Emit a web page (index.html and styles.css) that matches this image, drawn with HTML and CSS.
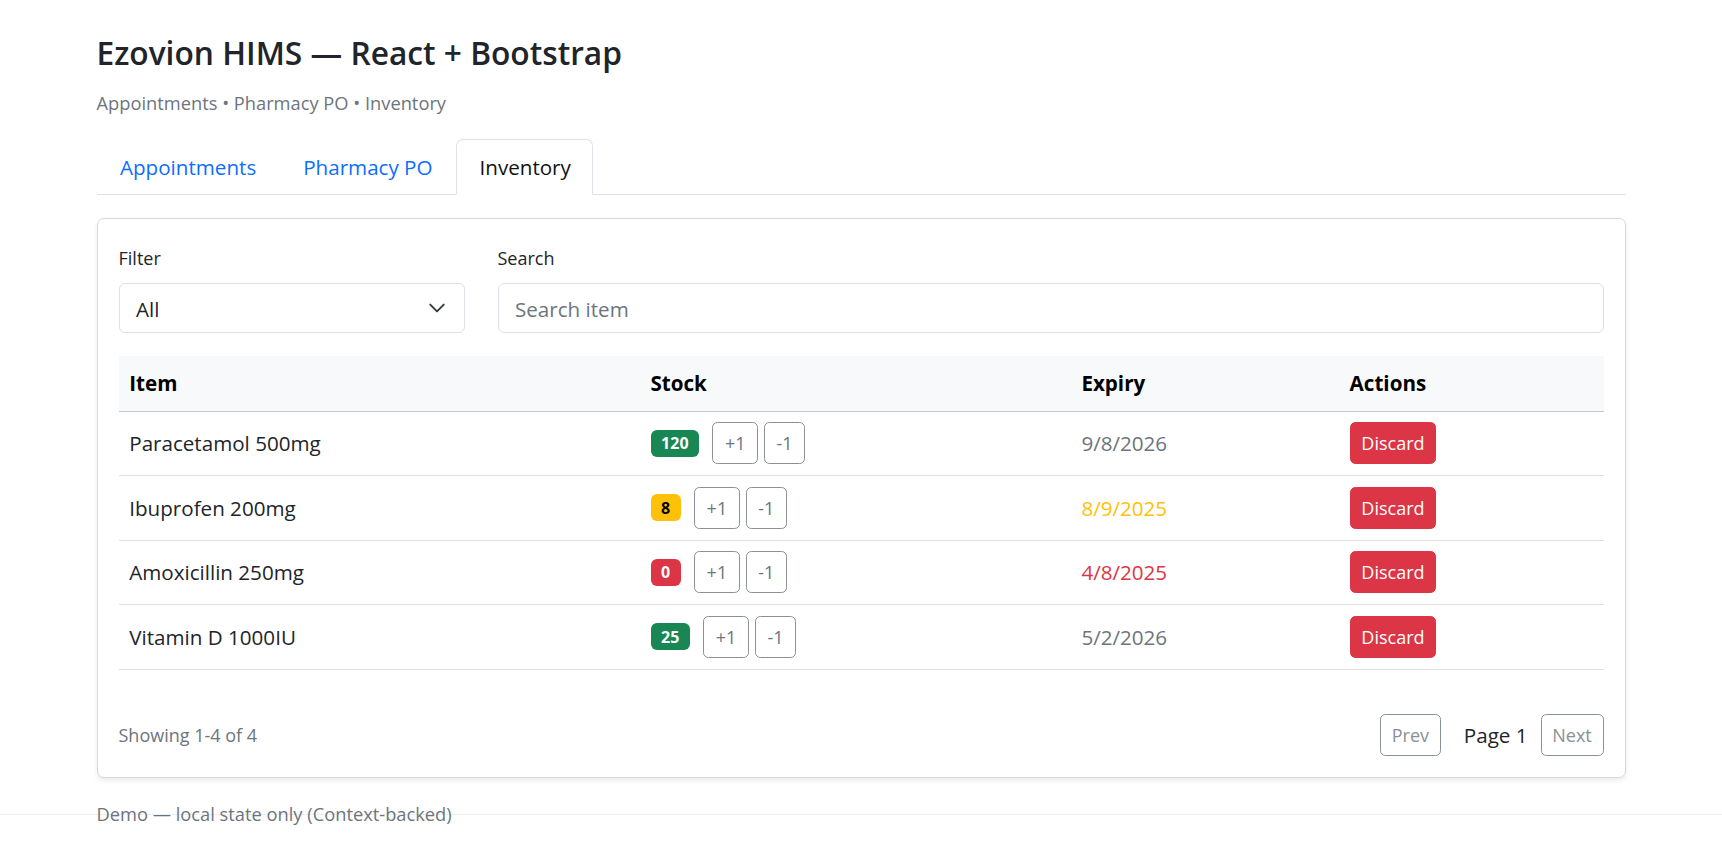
FILE: index.html
```html
<!DOCTYPE html>
<html lang="en">
<head>
<meta charset="utf-8">
<title>Ezovion HIMS — React + Bootstrap</title>
<link rel="stylesheet" href="styles.css">
</head>
<body>
<div class="page">
  <header class="head">
    <h1 class="title">Ezovion HIMS — React + Bootstrap</h1>
    <p class="subtitle">Appointments • Pharmacy PO • Inventory</p>
  </header>

  <nav class="tabs">
    <a class="tab" href="#">Appointments</a>
    <a class="tab" href="#">Pharmacy PO</a>
    <a class="tab active" href="#">Inventory</a>
  </nav>

  <section class="card">
    <div class="filters">
      <div class="field">
        <label class="label">Filter</label>
        <div class="select">
          <span>All</span>
          <svg class="chev" viewBox="0 0 16 16" width="18" height="18" aria-hidden="true"><path d="m2 5 6 6 6-6" fill="none" stroke="#343a40" stroke-width="1.7" stroke-linecap="round" stroke-linejoin="round"/></svg>
        </div>
      </div>
      <div class="field">
        <label class="label">Search</label>
        <input class="input" type="text" placeholder="Search item">
      </div>
    </div>

    <table class="table">
      <colgroup>
        <col class="c-item"><col class="c-stock"><col class="c-exp"><col class="c-act">
      </colgroup>
      <thead>
        <tr><th>Item</th><th>Stock</th><th>Expiry</th><th>Actions</th></tr>
      </thead>
      <tbody>
        <tr>
          <td>Paracetamol 500mg</td>
          <td><span class="badge ok">120</span><button class="btn step">+1</button><button class="btn step minus">-1</button></td>
          <td class="exp">9/8/2026</td>
          <td><button class="btn danger">Discard</button></td>
        </tr>
        <tr>
          <td>Ibuprofen 200mg</td>
          <td><span class="badge warn">8</span><button class="btn step">+1</button><button class="btn step minus">-1</button></td>
          <td class="exp warn-t">8/9/2025</td>
          <td><button class="btn danger">Discard</button></td>
        </tr>
        <tr>
          <td>Amoxicillin 250mg</td>
          <td><span class="badge bad">0</span><button class="btn step">+1</button><button class="btn step minus">-1</button></td>
          <td class="exp bad-t">4/8/2025</td>
          <td><button class="btn danger">Discard</button></td>
        </tr>
        <tr>
          <td>Vitamin D 1000IU</td>
          <td><span class="badge ok">25</span><button class="btn step">+1</button><button class="btn step minus">-1</button></td>
          <td class="exp">5/2/2026</td>
          <td><button class="btn danger">Discard</button></td>
        </tr>
      </tbody>
    </table>

    <div class="card-foot">
      <span class="showing">Showing 1-4 of 4</span>
      <div class="pager">
        <button class="btn pg" disabled>Prev</button>
        <span class="page-no">Page 1</span>
        <button class="btn pg" disabled>Next</button>
      </div>
    </div>
  </section>
</div>

<footer class="site-foot">
  <div class="page">
    <p class="foot-text">Demo — local state only (Context-backed)</p>
  </div>
</footer>
</body>
</html>
```

FILE: styles.css
```css
* { box-sizing: border-box; }

html, body {
  margin: 0;
  padding: 0;
  background: #fff;
}

body {
  font-family: "Open Sans", "Noto Sans", sans-serif;
  font-size: 20.6px;
  line-height: 32px;
  color: #212529;
}

.page {
  width: 1529px;
  margin: 0 auto;
}

.head {
  padding-top: 34px;
}

.title {
  margin: 0 0 17.5px;
  font-size: 31.7px;
  line-height: 37px;
  font-weight: 600;
  color: #212529;
}

.subtitle {
  margin: 0 0 23px;
  font-size: 18.3px;
  line-height: 27px;
  color: #6c757d;
}

/* tabs */
.tabs {
  display: flex;
  border-bottom: 1px solid #dee2e6;
}

.tab {
  display: block;
  padding: 11px 22.5px;
  line-height: 32px;
  border: 1px solid transparent;
  border-top-left-radius: 7px;
  border-top-right-radius: 7px;
  margin-bottom: -1px;
  color: #0d6efd;
  text-decoration: none;
}

.tab.active {
  color: #111;
  background: #fff;
  border-color: #dee2e6 #dee2e6 #fff;
  padding-right: 21px;
}

/* card */
.card {
  margin-top: 23px;
  border: 1px solid #d9d9d9;
  border-radius: 7px;
  padding: 25px 21px 21px;
  box-shadow: 0 2.5px 5px rgba(0, 0, 0, 0.075);
  background: #fff;
}

.filters {
  display: grid;
  grid-template-columns: 346px 1fr;
  column-gap: 33px;
  margin-bottom: 23px;
}

.field {
  display: flex;
  flex-direction: column;
}

.label {
  font-size: 18px;
  line-height: 28px;
  margin-bottom: 11px;
  color: #212529;
}

.select,
.input {
  height: 50.5px;
  border: 1px solid #dee2e6;
  border-radius: 6px;
  font-family: inherit;
  font-size: 20.6px;
  line-height: 32px;
  color: #212529;
  background: #fff;
}

.select {
  display: flex;
  align-items: center;
  justify-content: space-between;
  padding: 2px 17.3px 0 16.5px;
}

.chev { display: block; margin-top: -2px; }

.input {
  padding: 2px 16.5px 0;
  outline: none;
  width: 100%;
}

.input::placeholder { color: #6c757d; opacity: 1; }

/* table */
.table {
  width: 100%;
  border-collapse: collapse;
  table-layout: fixed;
  margin-bottom: 44px;
}

.c-item { width: 520.8px; }
.c-stock { width: 430.5px; }
.c-exp { width: 268px; }
.c-act { width: 264.4px; }

.table th {
  background: #f8f9fa;
  color: #000;
  font-weight: 700;
  text-align: left;
  padding: 11px 10.75px;
  line-height: 32.5px;
  border-bottom: 1px solid #c6c7c8;
}

.table td {
  padding: 10.75px 10.75px;
  line-height: 32px;
  vertical-align: middle;
  border-bottom: 1px solid #dee2e6;
  color: #212529;
  height: 64px;
}

.table td.exp { color: #6c757d; }
.table td.warn-t { color: #ffc107; }
.table td.bad-t { color: #dc3545; }

.badge {
  display: inline-block;
  vertical-align: middle;
  font-size: 16px;
  font-weight: 700;
  line-height: 16px;
  padding: 5.6px 10.6px;
  border-radius: 6px;
  color: #fff;
  margin-right: 13px;
}

.badge.ok { background: #198754; }
.badge.warn { background: #ffc107; color: #000; }
.badge.bad { background: #dc3545; }

.btn {
  display: inline-block;
  vertical-align: middle;
  font-family: inherit;
  font-size: 18px;
  line-height: 28px;
  padding: 6px 10.75px;
  border-radius: 5.4px;
  border: 1px solid transparent;
  background: transparent;
  cursor: pointer;
}

.btn.step {
  color: #6c757d;
  border-color: #8a9096;
  padding-left: 11.75px;
  padding-right: 11.75px;
}

.btn.minus {
  margin-left: 5.8px;
  padding-left: 11.5px;
  padding-right: 11.5px;
}

.btn.danger {
  background: #dc3545;
  border-color: #dc3545;
  color: #fff;
}

.btn.pg {
  color: #6c757d;
  border-color: #6c757d;
  opacity: 0.8;
}

.card-foot {
  display: flex;
  justify-content: space-between;
  align-items: center;
}

.showing {
  font-size: 18px;
  line-height: 28px;
  color: #6c757d;
}

.pager {
  display: flex;
  align-items: center;
}

.page-no {
  margin: 0 13px 0 23px;
  color: #212529;
}

/* footer */
.site-foot {
  margin-top: 36.5px;
  border-top: 1px solid #eceef0;
  padding-bottom: 20px;
}

.foot-text {
  margin: -15.5px 0 0;
  font-size: 18.3px;
  line-height: 27px;
  color: #6c757d;
}
```
